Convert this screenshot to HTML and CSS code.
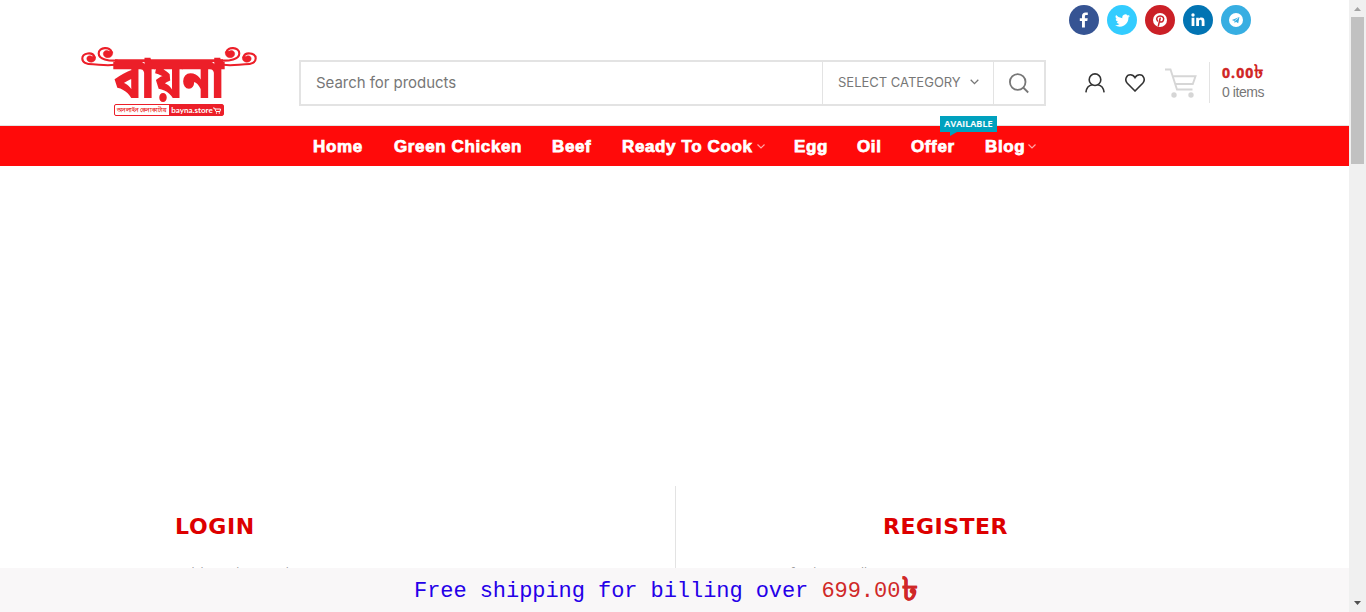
FILE: index.html
```html
<!DOCTYPE html>
<html lang="en">
<head>
<meta charset="utf-8">
<title>Bayna Store</title>
<link rel="stylesheet" href="styles.css">
</head>
<body>
<div class="window">
<div class="page">
  <div class="topbar">
    <a class="social facebook"><svg width="16" height="16" viewBox="0 0 16 16"><path fill="#fff" d="M6 15.500V9H3.800V6.200H6V4.100C6 1.500 7.400.4 9.600.4c1 0 1.900.1 2.200.2v2.500h-1.500C9.200 3.100 8.900 3.700 8.900 4.500v1.700h2.800L11.300 9H8.900v6.500z"/></svg></a>
    <a class="social twitter"><svg width="15" height="15" viewBox="0 0 24 24"><path fill="#fff" d="M24 4.600a10 10 0 0 1-2.800.8A5 5 0 0 0 23.300 2.700a10 10 0 0 1-3.100 1.200 4.900 4.900 0 0 0-8.400 4.500A14 14 0 0 1 1.700 3.200a4.900 4.900 0 0 0 1.500 6.600 5 5 0 0 1-2.200-.6 4.900 4.900 0 0 0 3.900 4.900 5 5 0 0 1-2.200.1 4.900 4.900 0 0 0 4.600 3.400A10 10 0 0 1 0 19.500a14 14 0 0 0 21.500-12.400A10 10 0 0 0 24 4.600z"/></svg></a>
    <a class="social pinterest"><svg width="14" height="14" viewBox="0 0 16 16"><circle cx="8" cy="8" r="8" fill="#fff"/><path fill="none" stroke="#cb2027" stroke-width="1.700" stroke-linecap="round" d="M5.100 9C2.800 5.800 5.300 3.500 8.300 3.500s4.600 2.100 3.600 4.800-4 2.600-4.300.9M8.200 6 6.100 14.700"/></svg></a>
    <a class="social linkedin"><svg width="14" height="14" viewBox="0 0 14 14"><g fill="#fff"><circle cx="2" cy="2" r="1.700"/><path d="M.6 4.700h2.800V13H.6zM5.200 4.700h2.600v1.200c.5-.9 1.400-1.400 2.600-1.400 2.500 0 3.100 1.600 3.100 3.900V13h-2.800V8.900c0-1.100-.1-2.100-1.300-2.100S8 7.700 8 8.800V13H5.200z"/></g></svg></a>
    <a class="social telegram"><svg width="14" height="14" viewBox="0 0 14 14"><circle cx="7" cy="7" r="7" fill="#fff"/><path fill="#37aee2" d="M2.900 7 10.400 3.900 9.200 10.200 6.900 8.700 5.700 10 5.300 8z"/><path stroke="#fff" stroke-width=".7" d="M5.500 8 9.300 5"/></svg></a>
  </div>

  <header class="header">
    <div class="logo">
      <svg class="flourish" width="176" height="22" viewBox="0 0 176 22">
        <g id="curl">
          <path d="M34 17.800C24 19 18 17.400 12 17.300 5 17.300 1.300 15.300 1.300 11.500c0-6 10.500-7 12.300-1.500M36 13.600C28 14 17.700 12.500 17.700 6.500c0-6.500 11.800-7.500 13-1" fill="none" stroke="#ec1f29" stroke-width="2.100" stroke-linecap="round"/>
          <path d="M14.500 10c.6 3-1.500 5.200-4.200 5.200-2.600 0-4.500-1.500-4.500-3.500 0-1.800 1.500-3.200 3.500-2.900 1.600.2 2.300 1.300 3.700.2zM31.600 4.800c.6 3.300-1.600 5.900-4.700 5.900-2.700 0-4.600-1.700-4.600-4 0-2 1.700-3.400 3.800-3.100 1.800.3 2.600 1.200 4.300.2z" fill="#ec1f29" stroke="#ec1f29" stroke-width=".5"/>
        </g>
        <use href="#curl" transform="translate(176) scale(-1 1)"/>
        <path d="M34 13.600h108" stroke="#ec1f29" stroke-width="2.800"/>
      </svg>
      <div class="wordmark" lang="bn">বায়না</div>
      <div class="tagline"><span class="tag-bn" lang="bn">অনলাইন কেনাকাটায়</span><span class="tag-en">bayna.store<svg width="8" height="7" viewBox="0 0 8 7"><path d="M0 1h1.500L3 4.500h4L7.500 2H2" fill="none" stroke="#fff"/><circle cx="3.500" cy="6" r=".7" fill="#fff"/><circle cx="6.300" cy="6" r=".7" fill="#fff"/></svg></span></div>
    </div>
    <form class="search">
      <span class="placeholder">Search for products</span>
      <span class="category">SELECT CATEGORY<svg width="9" height="6" viewBox="0 0 9 6"><path d="M.7.8 4.500 4.600 8.300.8" fill="none" stroke="#777" stroke-width="1.300"/></svg></span>
      <span class="submit"><svg width="20" height="21" viewBox="0 0 20 21"><g fill="none" stroke="#777" stroke-width="1.800"><circle cx="8.700" cy="9" r="7.800"/><path d="m14.200 14.500 5 5"/></g></svg></span>
    </form>
    <div class="tools">
      <svg class="user" width="20" height="20" viewBox="0 0 20 20"><g fill="none" stroke="#333" stroke-width="1.600"><circle cx="10" cy="6.700" r="5.800"/><path d="M.9 19.300c.6-4.500 3.300-7 6.300-7.500M19.100 19.300c-.6-4.500-3.300-7-6.300-7.500"/></g></svg>
      <svg class="heart" width="20" height="18" viewBox="0 0 20 18"><path d="M10 17 2.300 9.300C-.8 5.900 1.400.8 5.400.8 7.500.8 9 2 10 3.700 11 2 12.500.8 14.600.8c4 0 6.200 5.100 3.100 8.500z" fill="none" stroke="#333" stroke-width="1.600"/></svg>
      <svg class="cart" width="33" height="30" viewBox="0 0 33 30"><path d="M1 1.500h5.500L13 21.500h15.500M9.500 8.300h22L28.800 16H12" fill="none" stroke="#d6d6d6" stroke-width="1.900"/><circle cx="10" cy="27" r="2.700" fill="#d6d6d6"/><circle cx="27" cy="27" r="2.700" fill="#d6d6d6"/></svg>
      <div class="totals"><span class="amount">0.00<b class="taka">৳</b></span><span class="count">0 items</span></div>
    </div>
  </header>

  <nav class="nav">
    <a class="w-home">Home</a><a class="w-chicken">Green Chicken</a><a class="w-beef">Beef</a><a class="w-cook">Ready To Cook<svg width="8" height="5" viewBox="0 0 8 5"><path d="m.5.5 3.500 3.500L7.500.5" fill="none" stroke="#ffa6a6" stroke-width="1.200"/></svg></a><a class="w-egg">Egg</a><a class="w-oil">Oil</a><a class="w-offer">Offer<span class="badge">AVAILABLE</span></a><a class="w-blog">Blog<svg width="8" height="5" viewBox="0 0 8 5"><path d="m.5.5 3.500 3.500L7.500.5" fill="none" stroke="#ffa6a6" stroke-width="1.200"/></svg></a>
  </nav>

  <main class="account">
    <section class="login"><h2>LOGIN</h2><p>Mobile Number / Email</p></section>
    <section class="register"><h2>REGISTER</h2><p>Registering for this site allows</p></section>
  </main>

  <footer class="notice"><span>Free shipping for billing over <em>699.00</em></span><b class="taka">৳</b></footer>
</div>
<div class="scrollbar">
  <svg width="7" height="4" viewBox="0 0 7 4"><path d="M0 4 3.500 0 7 4z" fill="#a3a3a3"/></svg>
  <div class="thumb"></div>
  <svg width="7" height="4" viewBox="0 0 7 4"><path d="M0 0h7L3.500 4z" fill="#505050"/></svg>
</div>
</div>
</body>
</html>
```
FILE: styles.css
```css
* { box-sizing: border-box; }
body { margin: 0; background: #fff; font-family: Inter, sans-serif; overflow: hidden; }
svg { display: block; flex: none; }
.window { display: flex; height: 612px; }
.page { width: 1349px; display: flex; flex-direction: column; }
.topbar { height: 40px; display: flex; justify-content: flex-end; gap: 8px; padding: 5px 98px 0 0; }
.social { width: 30px; height: 30px; border-radius: 50%; display: flex; align-items: center; justify-content: center; }
.facebook { background: #365493; }
.twitter { background: #3cf; }
.pinterest { background: #cb2027; }
.linkedin { background: #0274b3; }
.telegram { background: #37aee2; }

.header { height: 86px; display: flex; border-bottom: 1px solid #e3e3e3; padding-left: 81px; }
.logo { width: 218px; padding-top: 7px; }
.flourish { margin-bottom: -22px; }
.wordmark { width: 176px; height: 57px; padding-top: 8px; text-align: center; color: #ec1f29; font: 900 48px/49px "Noto Sans Bengali", sans-serif; white-space: nowrap; transform: translateY(2px) scale(.95, 1.18); transform-origin: 50% 16px; }
.tagline { width: 110px; height: 12px; margin-left: 33px; display: flex; border: 1px solid #ec1f29; border-radius: 2px; font: 700 7px/10px Lato, sans-serif; white-space: nowrap; }
.tag-bn { width: 54px; font-size: 6px; color: #ec1f29; text-align: center; overflow: hidden; }
.tag-en { flex: 1; background: #ec1f29; color: #fff; display: flex; align-items: center; justify-content: center; font-size: 8px; }
.search { width: 747px; height: 46px; margin-top: 20px; border: 2px solid #e3e3e3; display: flex; color: #777; }
.search > span { display: flex; align-items: center; }
.placeholder { flex: 1; padding: 0 0 2px 15px; font-size: 15px; letter-spacing: -.04px; }
.category { width: 171px; border-left: 1px solid #e3e3e3; padding: 0 0 2px 15px; gap: 9px; font-size: 13px; letter-spacing: 0; }
.submit { width: 51px; border-left: 1px solid #e3e3e3; padding-left: 15px; }
.tools { display: flex; padding: 22px 0 0 39px; }
.user { margin-top: 11px; }
.heart { margin: 12px 0 0 20px; }
.cart { margin: 6px 0 0 19px; }
.totals { display: flex; flex-direction: column; height: 41px; border-left: 1px solid #e3e3e3; margin-left: 12px; padding-left: 12px; white-space: nowrap; }
.amount { display: flex; color: #d02525; font: 700 14px/21px "Open Sans", sans-serif; letter-spacing: 1.1px; -webkit-text-stroke: .4px; height: 21px; }
.amount .taka { font-size: 19px; letter-spacing: 0; line-height: 19px; -webkit-text-stroke: 0; }
.count { color: #777; font: 14px/19px "Liberation Sans", sans-serif; letter-spacing: -.45px; }

.nav { height: 40px; background: #ff0a0a; padding-left: 313px; display: flex; }
.nav a { position: relative; display: flex; align-items: center; gap: 4px; color: #fff; font: 700 17px/38px "Liberation Sans", Arial, sans-serif; letter-spacing: .62px; -webkit-text-stroke: .75px #fff; white-space: nowrap; padding-top: 2px; }
.nav svg { margin-top: -2px; }
.w-home { width: 81px; }
.w-chicken { width: 158px; }
.w-beef { width: 70px; }
.w-cook { width: 172px; }
.w-egg { width: 63px; }
.w-oil { width: 54px; }
.w-offer { width: 74px; }
.w-blog { width: 54px; }
.nav .w-blog { gap: 3px; }
.badge { position: absolute; left: 29px; top: -10px; width: 57px; height: 16px; background: #00a1be; font: 600 9px/16px "Open Sans", sans-serif; letter-spacing: .15px; text-align: center; -webkit-text-stroke: .2px; }
.badge::after { content: ""; position: absolute; left: 10px; top: 16px; border-top: 4px solid #00a1be; border-right: 7px solid transparent; }

.account { height: 402px; padding-top: 320px; display: flex; overflow: hidden; }
.account section { height: 82px; overflow: hidden; }
.login { width: 676px; border-right: 1px solid #e3e3e3; padding-left: 175px; }
.register { flex: 1; padding-left: 50px; }
h2 { margin: 27px 0 0; color: #d00; font: 700 22px/28px "DejaVu Sans", Verdana, sans-serif; letter-spacing: .65px; }
.register h2 { padding-left: 157px; letter-spacing: .5px; }
.account p { margin: 22px 0 0; color: #999; font: 12px/20px "Open Sans", sans-serif; letter-spacing: -.75px; }
.register p { letter-spacing: -.1px; }
.notice { height: 44px; background: #f9f7f8; display: flex; padding-left: 414px; color: #2500e8; font: 22px/48px "Liberation Mono", monospace; letter-spacing: -.06px; white-space: nowrap; }
.notice em { font-style: normal; color: #d02828; }
.notice .taka { color: #d02828; font-size: 32px; line-height: 48px; margin-left: 2px; -webkit-text-stroke: .3px; }
.scrollbar { width: 17px; background: #f0f0f0; display: flex; flex-direction: column; align-items: center; padding: 7px 0 7px; }
.thumb { width: 13px; height: 147px; margin: 6px 0 auto; background: #c1c1c1; }
```
